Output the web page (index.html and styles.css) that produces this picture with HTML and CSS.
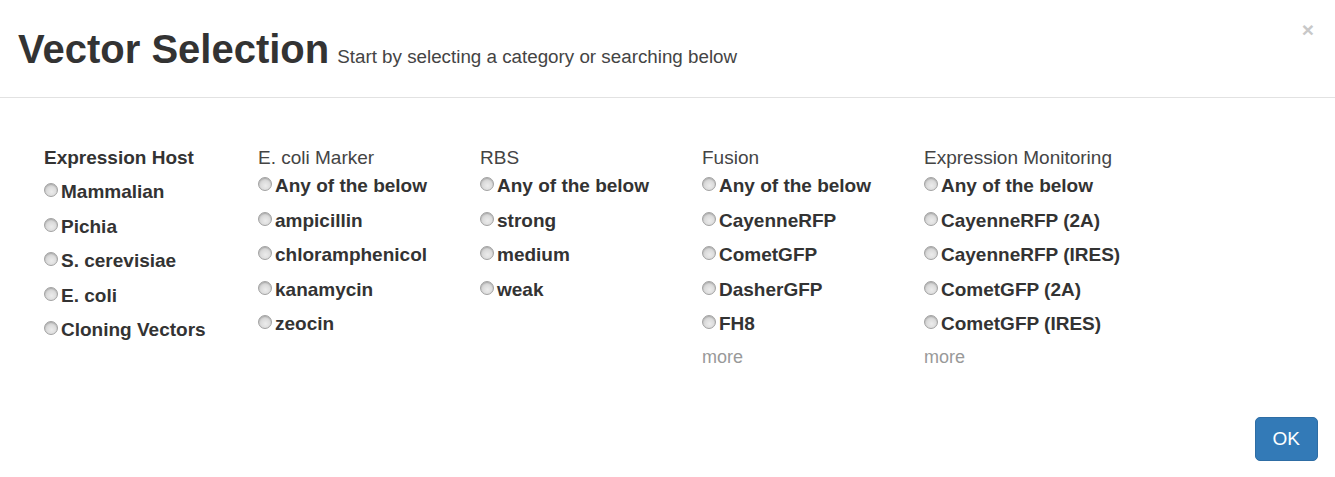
FILE: index.html
```html
<!DOCTYPE html>
<html lang="en">
<head>
<meta charset="utf-8">
<title>Vector Selection</title>
<link rel="stylesheet" href="styles.css">
</head>
<body>
<div class="modal">
  <div class="modal-header">
    <h1 class="title"><span class="title-main">Vector Selection</span><small class="subtitle">Start by selecting a category or searching below</small></h1>
    <button class="close" type="button" aria-label="Close">×</button>
  </div>
  <div class="modal-body">
    <div class="col col-first">
      <div class="col-head col-head-bold">Expression Host</div>
      <label class="opt"><input type="radio" name="host">Mammalian</label>
      <label class="opt"><input type="radio" name="host">Pichia</label>
      <label class="opt"><input type="radio" name="host">S. cerevisiae</label>
      <label class="opt"><input type="radio" name="host">E. coli</label>
      <label class="opt"><input type="radio" name="host">Cloning Vectors</label>
    </div>
    <div class="col">
      <div class="col-head">E. coli Marker</div>
      <label class="opt"><input type="radio" name="marker">Any of the below</label>
      <label class="opt"><input type="radio" name="marker">ampicillin</label>
      <label class="opt"><input type="radio" name="marker">chloramphenicol</label>
      <label class="opt"><input type="radio" name="marker">kanamycin</label>
      <label class="opt"><input type="radio" name="marker">zeocin</label>
    </div>
    <div class="col">
      <div class="col-head">RBS</div>
      <label class="opt"><input type="radio" name="rbs">Any of the below</label>
      <label class="opt"><input type="radio" name="rbs">strong</label>
      <label class="opt"><input type="radio" name="rbs">medium</label>
      <label class="opt"><input type="radio" name="rbs">weak</label>
    </div>
    <div class="col">
      <div class="col-head">Fusion</div>
      <label class="opt"><input type="radio" name="fusion">Any of the below</label>
      <label class="opt"><input type="radio" name="fusion">CayenneRFP</label>
      <label class="opt"><input type="radio" name="fusion">CometGFP</label>
      <label class="opt"><input type="radio" name="fusion">DasherGFP</label>
      <label class="opt"><input type="radio" name="fusion">FH8</label>
      <a class="more" href="#">more</a>
    </div>
    <div class="col">
      <div class="col-head">Expression Monitoring</div>
      <label class="opt"><input type="radio" name="mon">Any of the below</label>
      <label class="opt"><input type="radio" name="mon">CayenneRFP (2A)</label>
      <label class="opt"><input type="radio" name="mon">CayenneRFP (IRES)</label>
      <label class="opt"><input type="radio" name="mon">CometGFP (2A)</label>
      <label class="opt"><input type="radio" name="mon">CometGFP (IRES)</label>
      <a class="more" href="#">more</a>
    </div>
  </div>
  <div class="modal-footer">
    <button class="btn-ok" type="button">OK</button>
  </div>
</div>
</body>
</html>
```
FILE: styles.css
```css
html, body {
  margin: 0;
  padding: 0;
  background: #fff;
}
body {
  font-family: "Liberation Sans", Arial, Helvetica, sans-serif;
  color: #333;
  font-size: 19px;
}
.modal {
  width: 1335px;
  height: 477px;
  background: #fff;
  display: flex;
  flex-direction: column;
}
.modal-header {
  display: flex;
  align-items: flex-start;
  padding: 27px 18px 26px 18px;
  border-bottom: 1px solid #e2e2e2;
}
.title {
  flex: 1;
  display: flex;
  align-items: baseline;
  gap: 8px;
  margin: 0;
  height: 44px;
  font-size: 40px;
  line-height: 44px;
  font-weight: bold;
  color: #333;
}
.subtitle {
  font-size: 18.8px;
  line-height: 22px;
  font-weight: normal;
  color: #444;
}
.close {
  margin: -8px 3px 0 0;
  padding: 0;
  border: 0;
  background: transparent;
  font-family: "Liberation Sans", Arial, sans-serif;
  font-size: 21px;
  font-weight: bold;
  line-height: 21px;
  color: #c8c8c8;
  cursor: pointer;
}
.modal-body {
  display: grid;
  grid-template-columns: repeat(5, 222px);
  padding: 50px 0 0 36px;
}
.col {
  display: flex;
  flex-direction: column;
  align-items: flex-start;
}
.col-first {
  padding-left: 8px;
}
.col-head {
  font-size: 19px;
  line-height: 20px;
  color: #444;
  margin-bottom: 1px;
}
.col-head-bold {
  font-weight: bold;
  color: #333;
  margin-bottom: 7px;
}
.opt {
  display: block;
  font-weight: bold;
  line-height: 34.5px;
  white-space: nowrap;
  color: #333;
}
.opt input {
  -webkit-appearance: none;
  appearance: none;
  display: inline-block;
  box-sizing: border-box;
  width: 14px;
  height: 14px;
  margin: 0 3px 1px 0;
  vertical-align: baseline;
  border-radius: 50%;
  border: 1px solid #a2a2a2;
  background: radial-gradient(circle at 55% 65%, #ececec 0%, #dcdcdc 45%, #b9b9b9 100%);
  box-shadow: inset 0 1px 1px rgba(0,0,0,0.15);
}
.more {
  display: block;
  color: #999;
  text-decoration: none;
  line-height: 30px;
  font-size: 18px;
}
.modal-footer {
  margin-top: auto;
  display: flex;
  justify-content: flex-end;
  padding: 0 17px 16px 0;
}
.btn-ok {
  font-family: "Liberation Sans", Arial, sans-serif;
  font-size: 19px;
  line-height: 24px;
  padding: 9px 17px;
  color: #fff;
  background: #337ab7;
  border: 1px solid #2e6da4;
  border-radius: 5px;
  cursor: pointer;
}
```
